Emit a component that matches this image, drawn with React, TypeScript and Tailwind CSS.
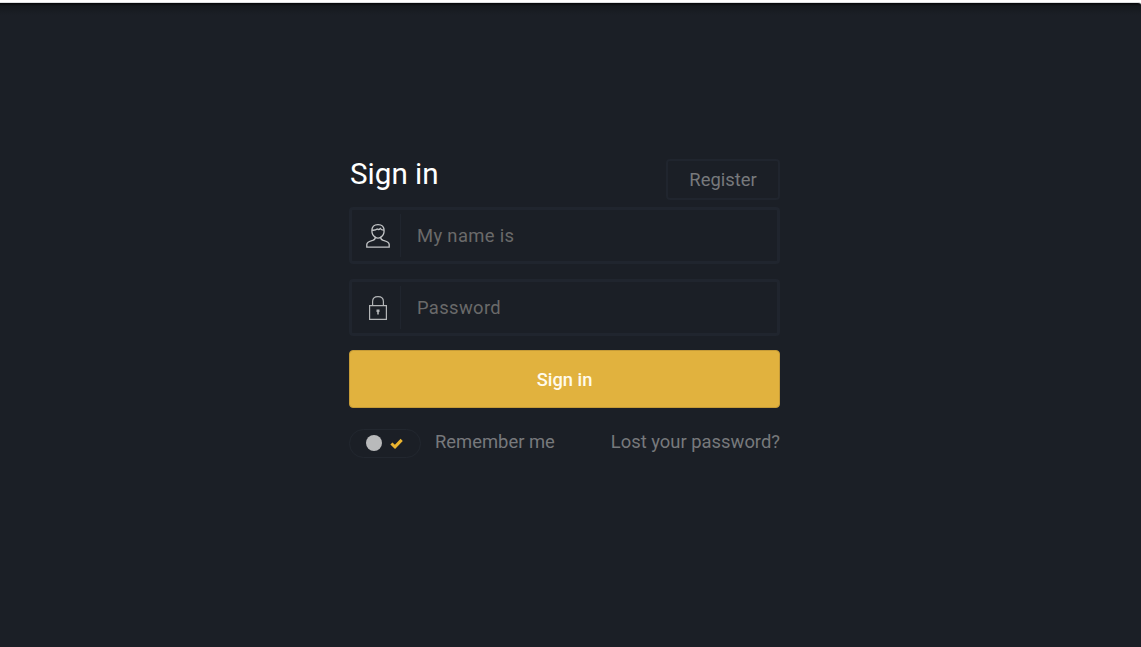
import React, { useState } from "react";

function UserIcon() {
  return (
    <svg width="24" height="24" viewBox="0 0 24 24" fill="none" stroke="#c3c5c7" strokeWidth="1.3">
      <path d="M9.3 13.2C7 12 5.900 9.800 5.900 6.800C5.900 3 8.300.7 12 .7s6.100 2.300 6.100 6.100c0 3-1.100 5.200-3.400 6.400" />
      <path d="M6 6.200c2.300.2 4.100-.2 5.200-1.200c1 .8 2 .8 3.200-.5c.6 1 1.900 1.600 3.500 1.700" />
      <path d="M9.300 13.200c0 2.200-.6 2.600-2.600 3.200C3 17.300.8 18.200.8 20.500V23.200H23.200V20.500c0-2.300-2.200-3.200-5.900-4.100c-2-.6-2.600-1-2.600-3.200c-1.700 1.100-3.700 1.100-5.400 0z" />
    </svg>
  );
}

function LockIcon() {
  return (
    <svg width="18" height="24" viewBox="0 0 18 24" fill="none" stroke="#b3b5b7" strokeWidth="1.2">
      <path d="M.6 9.600H17.400V23.300H.6z" />
      <path d="M3.600 9.500V5.600C3.600 2.600 5.700.7 9 .7s5.400 1.900 5.400 4.900V9.500" />
      <path d="M9 13.500v2.500" strokeWidth="3" />
      <path d="M9 15.500v3" strokeWidth="1.600" />
    </svg>
  );
}

function Field({ icon, type, placeholder }: { icon: React.ReactNode; type: string; placeholder: string }) {
  return (
    <label className="flex h-[57px] items-center rounded-[4px] border-[3px] border-[#20252e] pl-px">
      <span className="flex h-[43px] w-12 shrink-0 items-center justify-center border-r border-[#20252e] pl-[3px] pt-px">
        {icon}
      </span>
      <input
        type={type}
        placeholder={placeholder}
        className="ml-4 min-w-0 flex-1 bg-transparent text-[18.4px] tracking-[0.35px] text-[#b9bbbe] outline-none placeholder:text-[#6a6a6a]"
      />
    </label>
  );
}

export default function App() {
  const [remember, setRemember] = useState(true);
  return (
    <div className="h-[647px] w-full overflow-hidden bg-white pt-[2px] font-['Roboto',sans-serif]">
      <main className="flex h-full justify-center rounded-tr-[3px] border-t border-[#dcdfe1] bg-[#1b1f26] bg-[linear-gradient(#050608,#15191e_3px,#1b1f26_12px)] pr-[12px]">
        <form className="mt-[156px] w-[431px]" onSubmit={(e) => e.preventDefault()}>
          <div className="flex h-12 items-start justify-between">
            <h1 className="mt-[-4px] pl-px text-[29.6px] leading-[38px] font-[450] text-white">Sign in</h1>
            <button type="button" className="h-[41px] w-[114px] rounded-[4px] border-2 border-[#20252e] pt-px text-[18.4px] text-[#77797c]">
              Register
            </button>
          </div>
          <Field icon={<UserIcon />} type="text" placeholder="My name is" />
          <div className="mt-[15px]">
            <Field icon={<LockIcon />} type="password" placeholder="Password" />
          </div>
          <button type="submit" className="mt-[14px] h-[58px] w-full rounded-[4px] border border-[#c59b37] bg-[#e1b23e] pt-[2px] text-[18.3px] font-medium text-[#fffbed]">
            Sign in
          </button>
          <div className="mt-[21px] flex h-[29px] items-center text-[18.4px] text-[#77797c]">
            <button
              type="button"
              role="switch"
              aria-checked={remember}
              onClick={() => setRemember(!remember)}
              className="flex h-[29px] w-[72px] items-center gap-[7px] rounded-full border border-[#22272f] pb-px pl-4"
            >
              <span className="size-4 rounded-full bg-[#b9babb]" />
              <svg width="13" height="11" viewBox="0 0 13 11" className={remember ? "ml-px" : "invisible ml-px"}>
                <path d="M1.400 5.500L5 8.900L11.700 1.900" fill="none" stroke="#eab42f" strokeWidth="3" />
              </svg>
            </button>
            <span className="mb-[3px] ml-[14px]">Remember me</span>
            <a href="#" className="mb-[3px] ml-auto">Lost your password?</a>
          </div>
        </form>
      </main>
    </div>
  );
}
